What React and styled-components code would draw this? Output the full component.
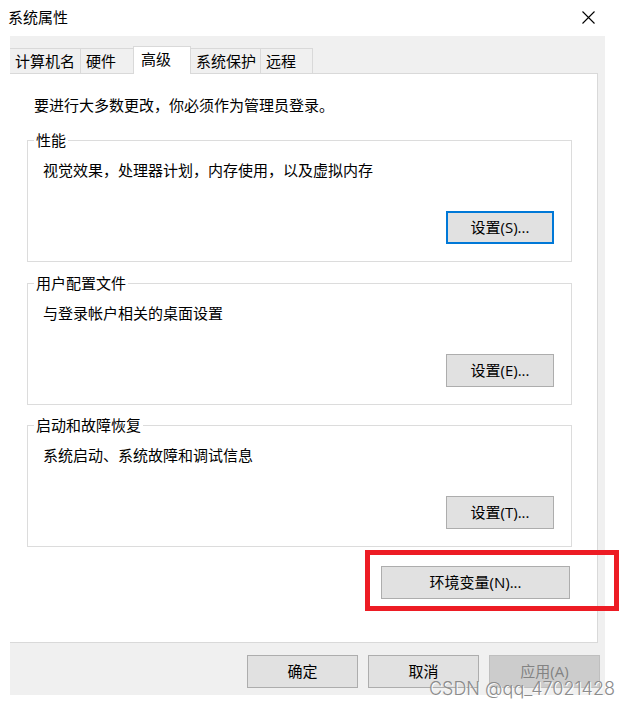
import {useState} from 'react'
import styled, {createGlobalStyle} from 'styled-components'

const TABS = ['计算机名', '硬件', '高级', '系统保护', '远程']

const GROUPS = [
    {title: '性能', text: '视觉效果，处理器计划，内存使用，以及虚拟内存', button: '设置(S)...', focused: true},
    {title: '用户配置文件', text: '与登录帐户相关的桌面设置', button: '设置(E)...'},
    {title: '启动和故障恢复', text: '系统启动、系统故障和调试信息', button: '设置(T)...'},
]

const App = () => {

    const [tab, setTab] = useState('高级')

    return (
        <>
            <GlobalStyle/>
            <Page>
                <TitleBar>
                    <Title>系统属性</Title>
                    <CloseBtn type="button" aria-label="关闭">
                        <svg width="13" height="13" viewBox="0 0 13 13" fill="none" stroke="#000" strokeWidth="1.1">
                            <path d="M0.5 0.5L12.5 12.5M12.5 0.5L0.5 12.5"/>
                        </svg>
                    </CloseBtn>
                </TitleBar>
                <Dialog>
                    <TabList role="tablist">
                        {TABS.map(name => (
                            <Tab
                                key={name}
                                type="button"
                                role="tab"
                                aria-selected={tab === name}
                                $active={tab === name}
                                $wide={name.length > 2}
                                onClick={() => setTab(name)}>{name}</Tab>
                        ))}
                    </TabList>
                    <Panel role="tabpanel">
                        <Notice>要进行大多数更改，你必须作为管理员登录。</Notice>
                        <Groups>
                            {GROUPS.map(group => (
                                <Group key={group.title}>
                                    <Legend>{group.title}</Legend>
                                    <GroupText>{group.text}</GroupText>
                                    <GroupBtn type="button" $focused={group.focused}>{group.button}</GroupBtn>
                                </Group>
                            ))}
                        </Groups>
                        <Marked>
                            <EnvBtn type="button">环境变量(N)...</EnvBtn>
                            <RedBox/>
                        </Marked>
                    </Panel>
                    <Footer>
                        <FooterBtn type="button">确定</FooterBtn>
                        <FooterBtn type="button">取消</FooterBtn>
                        <FooterBtn type="button" disabled>应用(A)</FooterBtn>
                    </Footer>
                </Dialog>
                <Watermark>CSDN @qq_47021428</Watermark>
            </Page>
        </>
    )
}

const GlobalStyle = createGlobalStyle`

    * {
        box-sizing: border-box;
    }

    body {
        margin: 0;
        background-color: #fff;
        color: #000;
        font-family: "Open Sans", "Noto Sans CJK SC", sans-serif;
        font-size: 15px;
        line-height: 21px;
    }

    button {
        font: inherit;
        color: inherit;
    }

`

const Page = styled.div`

    position: relative;
    padding: 0 25px 11px 10px;

`

const TitleBar = styled.header`

    display: flex;
    align-items: center;
    justify-content: space-between;
    height: 36px;
    padding: 0 10px 2px 0;

`

const Title = styled.h1`

    margin: 0 -2px;
    font-size: 15px;
    font-weight: 400;

`

const CloseBtn = styled.button`

    display: flex;
    padding: 0;
    border: 0;
    background: none;
    cursor: pointer;

`

const Dialog = styled.main`

    padding: 10px 7px 7px 0;
    background-color: #f0f0f0;

`

const TabList = styled.div`

    display: flex;
    align-items: flex-end;

`

const Tab = styled.button`

    width: ${({$wide}) => $wide ? '70px' : '52px'};
    height: 25px;
    padding: 0 0 0 5px;
    border: 1px solid #d9d9d9;
    border-width: 1px 1px 0 0;
    background-color: #f0f0f0;
    text-align: left;
    white-space: nowrap;

    &:first-child {
        width: 71px;
    }

    &:has(+ [aria-selected="true"]) {
        border-right-width: 0;
    }

    ${({$active}) => $active && `
        z-index: 1;
        width: 58px;
        height: 28px;
        margin-bottom: -1px;
        padding: 0 0 2px 7px;
        border-left-width: 1px;
        background-color: #fff;
    `}

`

const Panel = styled.section`

    padding: 21px 25px 43px 17px;
    border: 1px solid #d9d9d9;
    border-left: 0;
    background-color: #fff;

`

const Notice = styled.p`

    margin: 0 7px 14px;

`

const Groups = styled.div`

    display: flex;
    flex-direction: column;
    gap: 10px;

    & > :first-child {
        margin-bottom: 1px;
    }

`

const Group = styled.fieldset`

    display: flex;
    flex-direction: column;
    align-items: flex-start;
    min-width: 0;
    margin: 0;
    padding: 9px 17px 17px 15px;
    border: 1px solid #dcdcdc;

`

const Legend = styled.legend`

    margin-left: -9px;
    padding: 0 2px;

`

const GroupText = styled.p`

    margin: 0 0 30px;

`

const Button = styled.button`

    height: 33px;
    padding: 0;
    border: 1px solid #adadad;
    background-color: #e1e1e1;

    &:disabled {
        border-color: #bfbfbf;
        background-color: #ccc;
        color: #838383;
    }

`

const GroupBtn = styled(Button)`

    align-self: flex-end;
    width: 108px;

    ${({$focused}) => $focused && `
        border: 2px solid #0078d7;
    `}

`

const EnvBtn = styled(Button)`

    width: 189px;

`

const FooterBtn = styled(Button)`

    width: 111px;

`

const Marked = styled.div`

    position: relative;
    width: fit-content;
    margin: 19px 2px 0 auto;

`

const RedBox = styled.span`

    position: absolute;
    inset: -16px -49px -12px -16px;
    border: 5px solid #ed1c24;
    pointer-events: none;

`

const Footer = styled.footer`

    display: flex;
    justify-content: flex-end;
    gap: 10px;
    margin-right: -2px;
    padding-top: 12px;

`

const Watermark = styled.span`

    position: absolute;
    right: 15px;
    bottom: 7px;
    color: #8c8c8c;
    font-family: Inter, sans-serif;
    font-size: 18px;
    font-weight: 300;
    text-shadow: 1px 1px 0 #fff;
    pointer-events: none;

`

export default App
